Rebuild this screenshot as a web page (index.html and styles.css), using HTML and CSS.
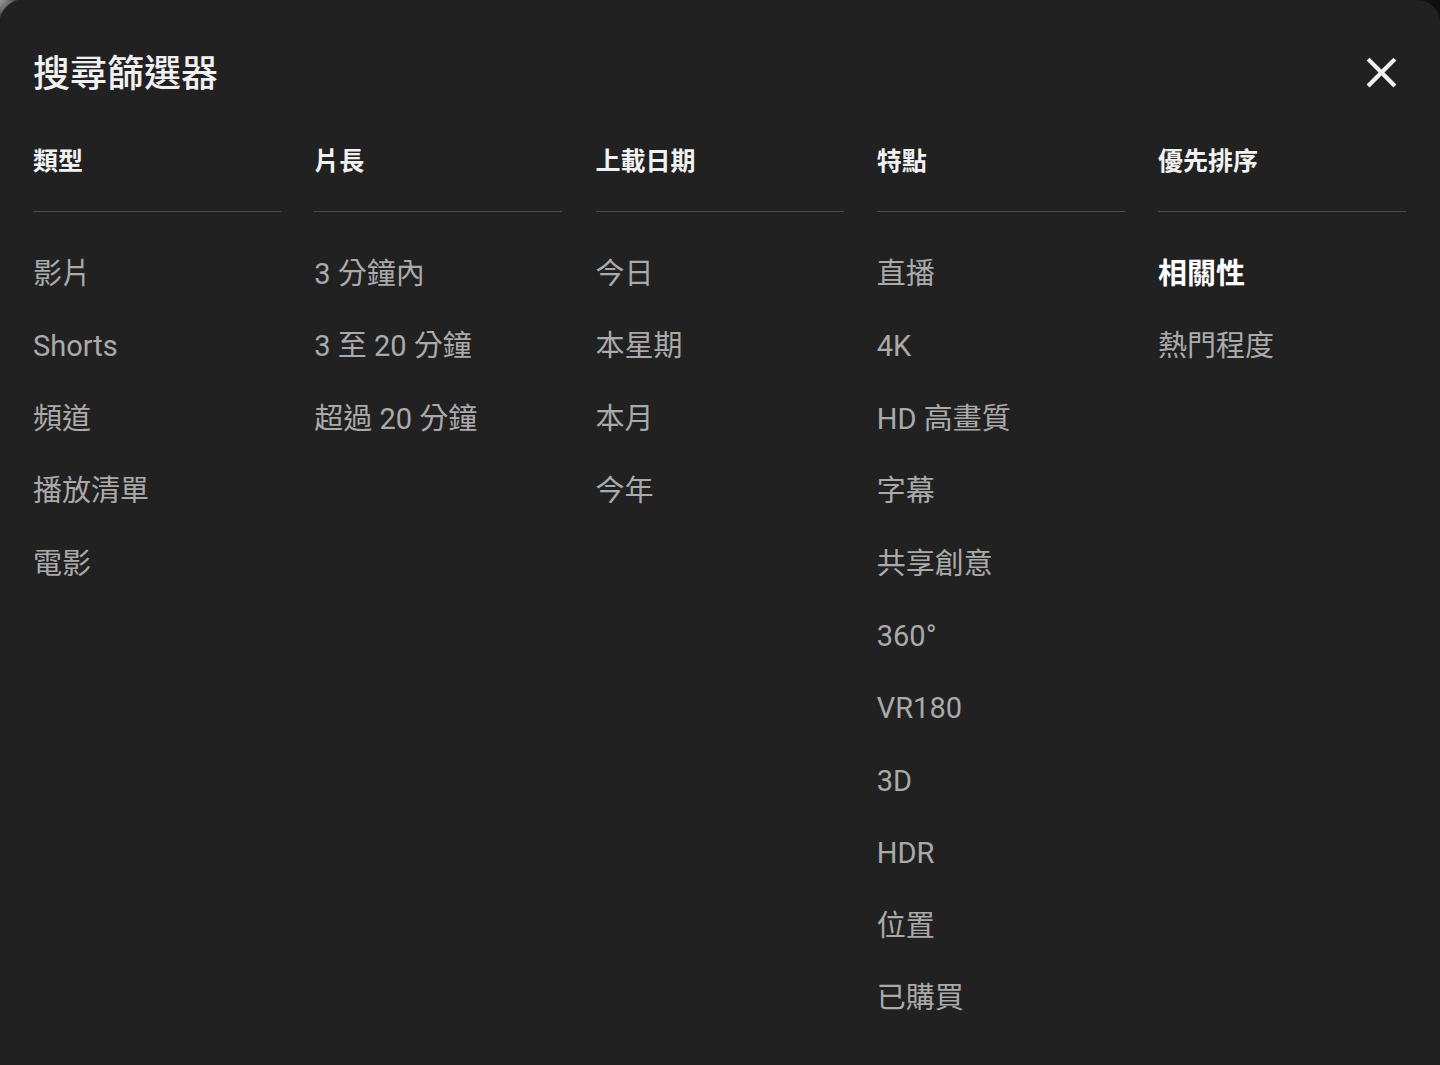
FILE: index.html
```html
<!DOCTYPE html>
<html lang="zh-Hant">
<head>
<meta charset="utf-8">
<title>搜尋篩選器</title>
<link rel="stylesheet" href="styles.css">
</head>
<body>
<div class="dialog">
  <div class="dialog-head">
    <h1 class="title">搜尋篩選器</h1>
    <button class="close" aria-label="關閉">
      <svg viewBox="0 0 24 24" width="51" height="51"><path fill="#f1f1f1" d="M19 6.41L17.59 5 12 10.59 6.41 5 5 6.41 10.59 12 5 17.59 6.41 19 12 13.41 17.59 19 19 17.59 13.41 12z"/></svg>
    </button>
  </div>
  <div class="groups">
    <div class="group">
      <h2 class="group-title">類型</h2>
      <ul class="options">
        <li>影片</li>
        <li>Shorts</li>
        <li>頻道</li>
        <li>播放清單</li>
        <li>電影</li>
      </ul>
    </div>
    <div class="group">
      <h2 class="group-title">片長</h2>
      <ul class="options">
        <li>3 分鐘內</li>
        <li>3 至 20 分鐘</li>
        <li>超過 20 分鐘</li>
      </ul>
    </div>
    <div class="group">
      <h2 class="group-title">上載日期</h2>
      <ul class="options">
        <li>今日</li>
        <li>本星期</li>
        <li>本月</li>
        <li>今年</li>
      </ul>
    </div>
    <div class="group">
      <h2 class="group-title">特點</h2>
      <ul class="options">
        <li>直播</li>
        <li>4K</li>
        <li>HD 高畫質</li>
        <li>字幕</li>
        <li>共享創意</li>
        <li>360°</li>
        <li>VR180</li>
        <li>3D</li>
        <li>HDR</li>
        <li>位置</li>
        <li>已購買</li>
      </ul>
    </div>
    <div class="group">
      <h2 class="group-title">優先排序</h2>
      <ul class="options">
        <li class="selected">相關性</li>
        <li>熱門程度</li>
      </ul>
    </div>
  </div>
</div>
</body>
</html>
```
FILE: styles.css
```css
html {
  background: #0f0f0f;
}
body {
  margin: 0;
  font-family: Roboto, "Noto Sans CJK TC", "Noto Sans", sans-serif;
  color: #f1f1f1;
  background: radial-gradient(circle at 0 0, #9a9a9a 0, #6a6a6a 10px, #0f0f0f 22px) no-repeat, #0f0f0f;
}
.dialog {
  background: #212121;
  min-height: 1065px;
  box-sizing: border-box;
  border-radius: 22px 22px 0 0;
  padding: 49px 34px 0 33px;
}
.dialog-head {
  display: flex;
  align-items: center;
  justify-content: space-between;
  height: 48px;
}
.title {
  margin: 0;
  padding-top: 3px;
  font-size: 37px;
  line-height: 48px;
  font-weight: 500;
  color: #f1f1f1;
}
.close {
  background: none;
  border: 0;
  padding: 0;
  width: 51px;
  height: 51px;
  margin-right: -1px;
  margin-top: -2px;
  display: flex;
  align-items: center;
  justify-content: center;
  cursor: pointer;
}
.close svg {
  display: block;
}
.groups {
  display: grid;
  grid-template-columns: repeat(5, 248px);
  column-gap: 33.25px;
  margin-top: 47px;
}
.group-title {
  margin: 0;
  font-size: 25px;
  line-height: 36px;
  font-weight: 700;
  color: #f1f1f1;
  padding-bottom: 31px;
  border-bottom: 1.5px solid #4d4d4d;
}
.options {
  list-style: none;
  margin: 26px 0 0;
  padding: 0;
}
.options li {
  font-size: 29px;
  line-height: 72.4px;
  color: #aaaaaa;
  white-space: nowrap;
}
.options li.selected {
  color: #ffffff;
  font-weight: 700;
}
```
